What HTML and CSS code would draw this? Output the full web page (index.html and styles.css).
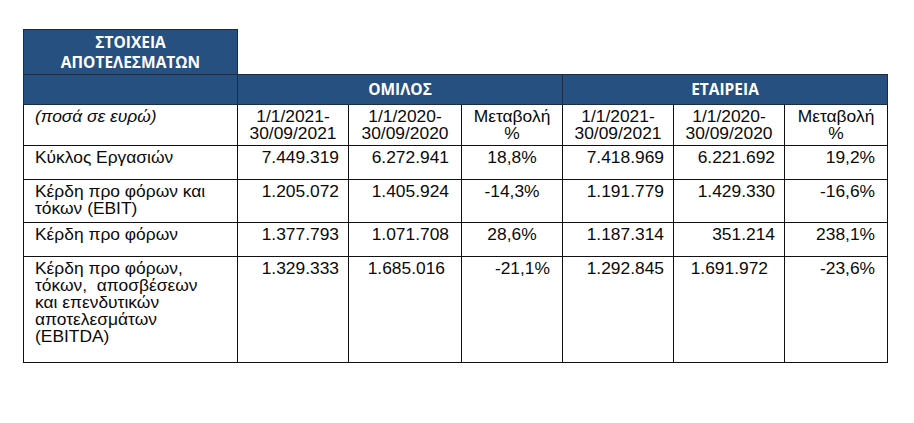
FILE: index.html
```html
<!DOCTYPE html>
<html lang="el">
<head>
<meta charset="utf-8">
<title>Στοιχεία Αποτελεσμάτων</title>
<link rel="stylesheet" href="styles.css">
</head>
<body>
<table class="results">
  <colgroup>
    <col class="c-label">
    <col class="c-a">
    <col class="c-b">
    <col class="c-c">
    <col class="c-a">
    <col class="c-a">
    <col class="c-d">
  </colgroup>
  <tr class="r-title">
    <th class="hd hd-title">ΣΤΟΙΧΕΙΑ<br>ΑΠΟΤΕΛΕΣΜΑΤΩΝ</th>
    <td class="blank" colspan="6"></td>
  </tr>
  <tr class="r-group">
    <th class="hd"></th>
    <th class="hd hd-group" colspan="3">ΟΜΙΛΟΣ</th>
    <th class="hd hd-group" colspan="3">ΕΤΑΙΡΕΙΑ</th>
  </tr>
  <tr class="r-periods">
    <td class="label it">(ποσά σε ευρώ)</td>
    <td class="mid">1/1/2021-<br>30/09/2021</td>
    <td class="mid">1/1/2020-<br>30/09/2020</td>
    <td class="mid">Μεταβολή<br>%</td>
    <td class="mid">1/1/2021-<br>30/09/2021</td>
    <td class="mid">1/1/2020-<br>30/09/2020</td>
    <td class="mid">Μεταβολή<br>%</td>
  </tr>
  <tr class="r-one">
    <td class="label">Κύκλος Εργασιών</td>
    <td class="num">7.449.319</td>
    <td class="num num-w">6.272.941</td>
    <td class="mid">18,8%</td>
    <td class="num">7.418.969</td>
    <td class="num">6.221.692</td>
    <td class="num num-w">19,2%</td>
  </tr>
  <tr class="r-two">
    <td class="label">Κέρδη προ φόρων και<br>τόκων (EBIT)</td>
    <td class="num">1.205.072</td>
    <td class="num num-w">1.405.924</td>
    <td class="mid">-14,3%</td>
    <td class="num">1.191.779</td>
    <td class="num">1.429.330</td>
    <td class="num num-w">-16,6%</td>
  </tr>
  <tr class="r-one">
    <td class="label">Κέρδη προ φόρων</td>
    <td class="num">1.377.793</td>
    <td class="num num-w">1.071.708</td>
    <td class="mid">28,6%</td>
    <td class="num">1.187.314</td>
    <td class="num">351.214</td>
    <td class="num num-w">238,1%</td>
  </tr>
  <tr class="r-five">
    <td class="label">Κέρδη προ φόρων,<br>τόκων,&nbsp; αποσβέσεων<br>και επενδυτικών<br>αποτελεσμάτων<br>(EBITDA)</td>
    <td class="num">1.329.333</td>
    <td class="num num-x">1.685.016</td>
    <td class="num num-w">-21,1%</td>
    <td class="num">1.292.845</td>
    <td class="num num-x">1.691.972</td>
    <td class="num num-w">-23,6%</td>
  </tr>
</table>
</body>
</html>
```
FILE: styles.css
```css
html, body {
  margin: 0;
  padding: 0;
  background: #ffffff;
}

body {
  padding: 29px 0 0 23px;
}

.results {
  border-collapse: collapse;
  table-layout: fixed;
  width: 864px;
  font-family: "Liberation Sans", Arial, sans-serif;
  font-size: 17.4px;
  line-height: 17px;
  color: #0a0a0a;
}

.c-label { width: 214px; }
.c-a { width: 111px; }
.c-b { width: 113px; }
.c-c { width: 101px; }
.c-d { width: 103px; }

.results td {
  border: 1px solid #111111;
  vertical-align: top;
  padding: 3px 0 0 0;
}

.results td.blank {
  border: none;
  border-bottom: 1px solid #1b2c44;
}

.hd {
  background: #26507f;
  color: #ffffff;
  border: 1px solid #1b2c44;
  font-family: "Open Sans", "Liberation Sans", sans-serif;
  font-weight: 700;
  font-size: 15.5px;
  line-height: 20px;
  text-align: center;
  vertical-align: top;
  padding: 0;
}

.hd-title {
  padding-top: 2px;
}

.hd-group {
  padding-top: 4px;
}

.hd + .hd-group + .hd-group {
  border-left-color: #4a6f99;
}

.r-title { height: 45px; }
.r-group { height: 30px; }
.r-periods { height: 41px; }
.r-one { height: 34px; }
.r-two { height: 43px; }
.r-five { height: 106px; }

.label {
  text-align: left;
  padding-left: 11px !important;
}

.it {
  font-style: italic;
}

.mid {
  text-align: center;
}

.num {
  text-align: right;
  padding-right: 9px !important;
}

.num.num-w {
  padding-right: 12px !important;
}

.num.num-x {
  padding-right: 16px !important;
}
```
